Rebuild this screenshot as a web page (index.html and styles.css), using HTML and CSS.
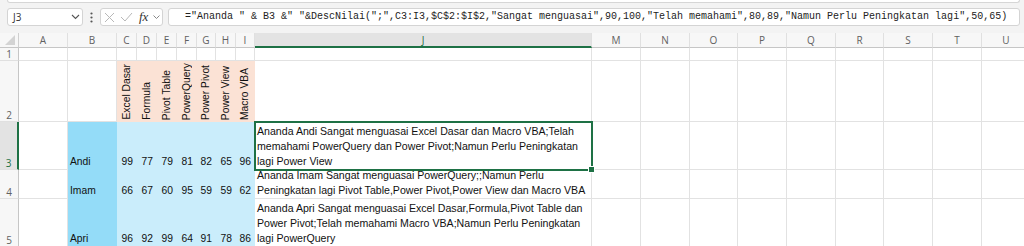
FILE: index.html
```html
<!DOCTYPE html>
<html lang="id">
<head>
  <meta charset="UTF-8">
  <title>DescNilai</title>
  <link rel="stylesheet" href="styles.css">
</head>
<body>
<div class="ribbon-edge"></div>

<div class="formula-bar">
  <div class="name-box">
    <span>J3</span>
    <svg width="9" height="6" viewBox="0 0 9 6"><path d="M1 1l3.5 3.5L8 1" fill="none" stroke="#555" stroke-width="1.1"/></svg>
  </div>
  <div class="grip">
    <svg width="3" height="11" viewBox="0 0 3 11"><circle cx="1.5" cy="1.5" r="1.1" fill="#555"/><circle cx="1.5" cy="5.5" r="1.1" fill="#555"/><circle cx="1.5" cy="9.5" r="1.1" fill="#555"/></svg>
  </div>
  <div class="fx-box">
    <svg width="11" height="11" viewBox="0 0 11 11"><path d="M1 1l9 9M10 1l-9 9" stroke="#b8b8b8" stroke-width="1"/></svg>
    <svg width="13" height="10" viewBox="0 0 13 10"><path d="M1 5l4 4 7-8" fill="none" stroke="#b8b8b8" stroke-width="1"/></svg>
    <span class="fx">fx</span>
    <svg width="7" height="5" viewBox="0 0 7 5"><path d="M0.5 0.5l3 3 3-3" fill="none" stroke="#888" stroke-width="1"/></svg>
  </div>
  <div class="formula">="Ananda " &amp; B3 &amp;" "&amp;DescNilai(";",C3:I3,$C$2:$I$2,"Sangat menguasai",90,100,"Telah memahami",80,89,"Namun Perlu Peningkatan lagi",50,65)</div>
</div>

<div class="sheet">
  <!-- column headers -->
  <div class="corner"><svg width="10" height="10" viewBox="0 0 10 10"><path d="M10 0V10H0Z" fill="#d3d3d3"/></svg></div>
  <div class="ch">A</div><div class="ch">B</div><div class="ch">C</div><div class="ch">D</div><div class="ch">E</div>
  <div class="ch">F</div><div class="ch">G</div><div class="ch">H</div><div class="ch">I</div><div class="ch sel">J</div>
  <div class="ch">M</div><div class="ch">N</div><div class="ch">O</div><div class="ch">P</div><div class="ch">Q</div>
  <div class="ch">R</div><div class="ch">S</div><div class="ch">T</div><div class="ch">U</div>

  <!-- row 1 -->
  <div class="rh">1</div>
  <div class="c"></div><div class="c"></div><div class="c"></div><div class="c"></div><div class="c"></div>
  <div class="c"></div><div class="c"></div><div class="c"></div><div class="c"></div><div class="c"></div>
  <div class="c"></div><div class="c"></div><div class="c"></div><div class="c"></div><div class="c"></div>
  <div class="c"></div><div class="c"></div><div class="c"></div><div class="c"></div>

  <!-- row 2 -->
  <div class="rh">2</div>
  <div class="c"></div><div class="c"></div>
  <div class="c hd"><span>Excel Dasar</span></div>
  <div class="c hd"><span>Formula</span></div>
  <div class="c hd"><span>Pivot Table</span></div>
  <div class="c hd"><span>PowerQuery</span></div>
  <div class="c hd"><span>Power Pivot</span></div>
  <div class="c hd"><span>Power View</span></div>
  <div class="c hd"><span>Macro VBA</span></div>
  <div class="c"></div>
  <div class="c"></div><div class="c"></div><div class="c"></div><div class="c"></div><div class="c"></div>
  <div class="c"></div><div class="c"></div><div class="c"></div><div class="c"></div>

  <!-- row 3 -->
  <div class="rh sel">3</div>
  <div class="c"></div><div class="c nm">Andi</div>
  <div class="c n">99</div><div class="c n">77</div><div class="c n">79</div><div class="c n">81</div>
  <div class="c n">82</div><div class="c n">65</div><div class="c n">96</div>
  <div class="c t active"><span>Ananda Andi Sangat menguasai Excel Dasar dan Macro VBA;Telah<br>memahami PowerQuery dan Power Pivot;Namun Perlu Peningkatan<br>lagi Power View</span></div>
  <div class="c"></div><div class="c"></div><div class="c"></div><div class="c"></div><div class="c"></div>
  <div class="c"></div><div class="c"></div><div class="c"></div><div class="c"></div>

  <!-- row 4 -->
  <div class="rh">4</div>
  <div class="c"></div><div class="c nm">Imam</div>
  <div class="c n">66</div><div class="c n">67</div><div class="c n">60</div><div class="c n">95</div>
  <div class="c n">59</div><div class="c n">59</div><div class="c n">62</div>
  <div class="c t"><span>Ananda Imam Sangat menguasai PowerQuery;;Namun Perlu<br>Peningkatan lagi Pivot Table,Power Pivot,Power View dan Macro VBA</span></div>
  <div class="c"></div><div class="c"></div><div class="c"></div><div class="c"></div><div class="c"></div>
  <div class="c"></div><div class="c"></div><div class="c"></div><div class="c"></div>

  <!-- row 5 -->
  <div class="rh">5</div>
  <div class="c"></div><div class="c nm">Apri</div>
  <div class="c n">96</div><div class="c n">92</div><div class="c n">99</div><div class="c n">64</div>
  <div class="c n">91</div><div class="c n">78</div><div class="c n">86</div>
  <div class="c t"><span>Ananda Apri Sangat menguasai Excel Dasar,Formula,Pivot Table dan<br>Power Pivot;Telah memahami Macro VBA;Namun Perlu Peningkatan<br>lagi PowerQuery</span></div>
  <div class="c"></div><div class="c"></div><div class="c"></div><div class="c"></div><div class="c"></div>
  <div class="c"></div><div class="c"></div><div class="c"></div><div class="c"></div>
</div>
</body>
</html>
```

FILE: styles.css
```css
body {
  margin: 0;
  background: #f3f3f3;
  font-family: "Liberation Sans", Arial, sans-serif;
  overflow: hidden;
}

/* bottom edge of the ribbon */
.ribbon-edge {
  height: 2px;
  margin: 0 4px 0 7px;
  background: #fff;
  border: 1px solid #d6d6d6;
  border-top: none;
  border-radius: 0 0 4px 4px;
}

/* formula bar */
.formula-bar {
  display: flex;
  align-items: center;
  height: 18px;
  margin-top: 5px;
  padding-left: 7px;
}
.name-box {
  width: 76px;
  height: 18px;
  box-sizing: border-box;
  display: flex;
  align-items: center;
  justify-content: space-between;
  padding: 0 2px 0 5px;
  background: #fff;
  border: 1px solid #d4d4d4;
  border-radius: 3px;
  font-family: "Open Sans", sans-serif;
  font-size: 10px;
  color: #333;
}
.grip {
  width: 17px;
  display: flex;
  justify-content: center;
}
.fx-box {
  width: 63px;
  height: 18px;
  box-sizing: border-box;
  display: flex;
  align-items: center;
  gap: 5px;
  padding-left: 3px;
  background: #fff;
  border: 1px solid #d4d4d4;
  border-radius: 3px;
}
.fx {
  font-family: "Liberation Serif", serif;
  font-style: italic;
  font-size: 13px;
  color: #333;
  margin-left: 1px;
}
.formula {
  flex: 1;
  height: 18px;
  box-sizing: border-box;
  margin: 0 4px 0 5px;
  padding-left: 16px;
  background: #fff;
  border: 1px solid #d4d4d4;
  border-radius: 3px;
  font-family: "Liberation Mono", monospace;
  font-size: 10px;
  line-height: 16px;
  color: #222;
  white-space: pre;
  overflow: hidden;
}

/* grid */
.sheet {
  margin-top: 7px;
  display: grid;
  grid-template-columns: 19px 49px 49px 20px 20px 20px 20px 19px 20px 19px 337px 49px 49px 48px 49px 49px 48px 49px 49px 49px;
  grid-template-rows: 15px 13px 61px 48px 29px 48px;
  width: 1031px;
}
.corner, .ch, .rh, .c {
  box-sizing: border-box;
}
.corner {
  display: flex;
  align-items: flex-end;
  justify-content: flex-end;
  padding: 0 3px 2px 0;
  background: #f7f7f7;
  border-right: 1px solid #cfcfcf;
  border-bottom: 1px solid #c6c6c6;
}
.ch {
  display: flex;
  align-items: center;
  justify-content: center;
  background: #f7f7f7;
  border-right: 1px solid #e0e0e0;
  border-bottom: 1px solid #c6c6c6;
  font-family: "Open Sans", sans-serif;
  font-size: 10px;
  color: #616161;
}
.ch.sel {
  background: #e3e3e3;
  color: #1e7145;
  border-bottom: 2px solid #1e7145;
}
.rh {
  display: flex;
  align-items: flex-end;
  justify-content: center;
  background: #f7f7f7;
  border-right: 1px solid #c6c6c6;
  border-bottom: 1px solid #e0e0e0;
  font-family: "Open Sans", sans-serif;
  font-size: 10px;
  line-height: 12px;
  color: #616161;
  overflow: hidden;
}
.rh.sel {
  background: #e3e3e3;
  color: #1e7145;
  border-right: 2px solid #1e7145;
}

/* cells */
.c {
  display: flex;
  align-items: flex-end;
  padding: 0 2px;
  background: #fff;
  border-right: 1px solid #e2e2e2;
  border-bottom: 1px solid #e2e2e2;
  font-size: 10.3px;
  line-height: 15px;
  color: #111;
  white-space: nowrap;
  overflow: hidden;
}
.t {
  font-size: 10.6px;
}
.hd {
  justify-content: center;
  padding: 0 0 1px;
  background: #fbe2d5;
  border-color: transparent;
}
.hd span {
  writing-mode: vertical-rl;
  transform: rotate(180deg);
  line-height: 12px;
}
.nm {
  background: #94dcf8;
  border-color: transparent;
}
.n {
  justify-content: flex-end;
  padding-right: 3px;
  background: #caedfb;
  border-color: transparent;
}
.active {
  position: relative;
  z-index: 1;
  overflow: visible;
  outline: 2px solid #1e7145;
  outline-offset: -1px;
}
.active::after {
  content: "";
  position: absolute;
  right: -4px;
  bottom: -4px;
  width: 5px;
  height: 5px;
  background: #1e7145;
  border: 1px solid #fff;
}
```
